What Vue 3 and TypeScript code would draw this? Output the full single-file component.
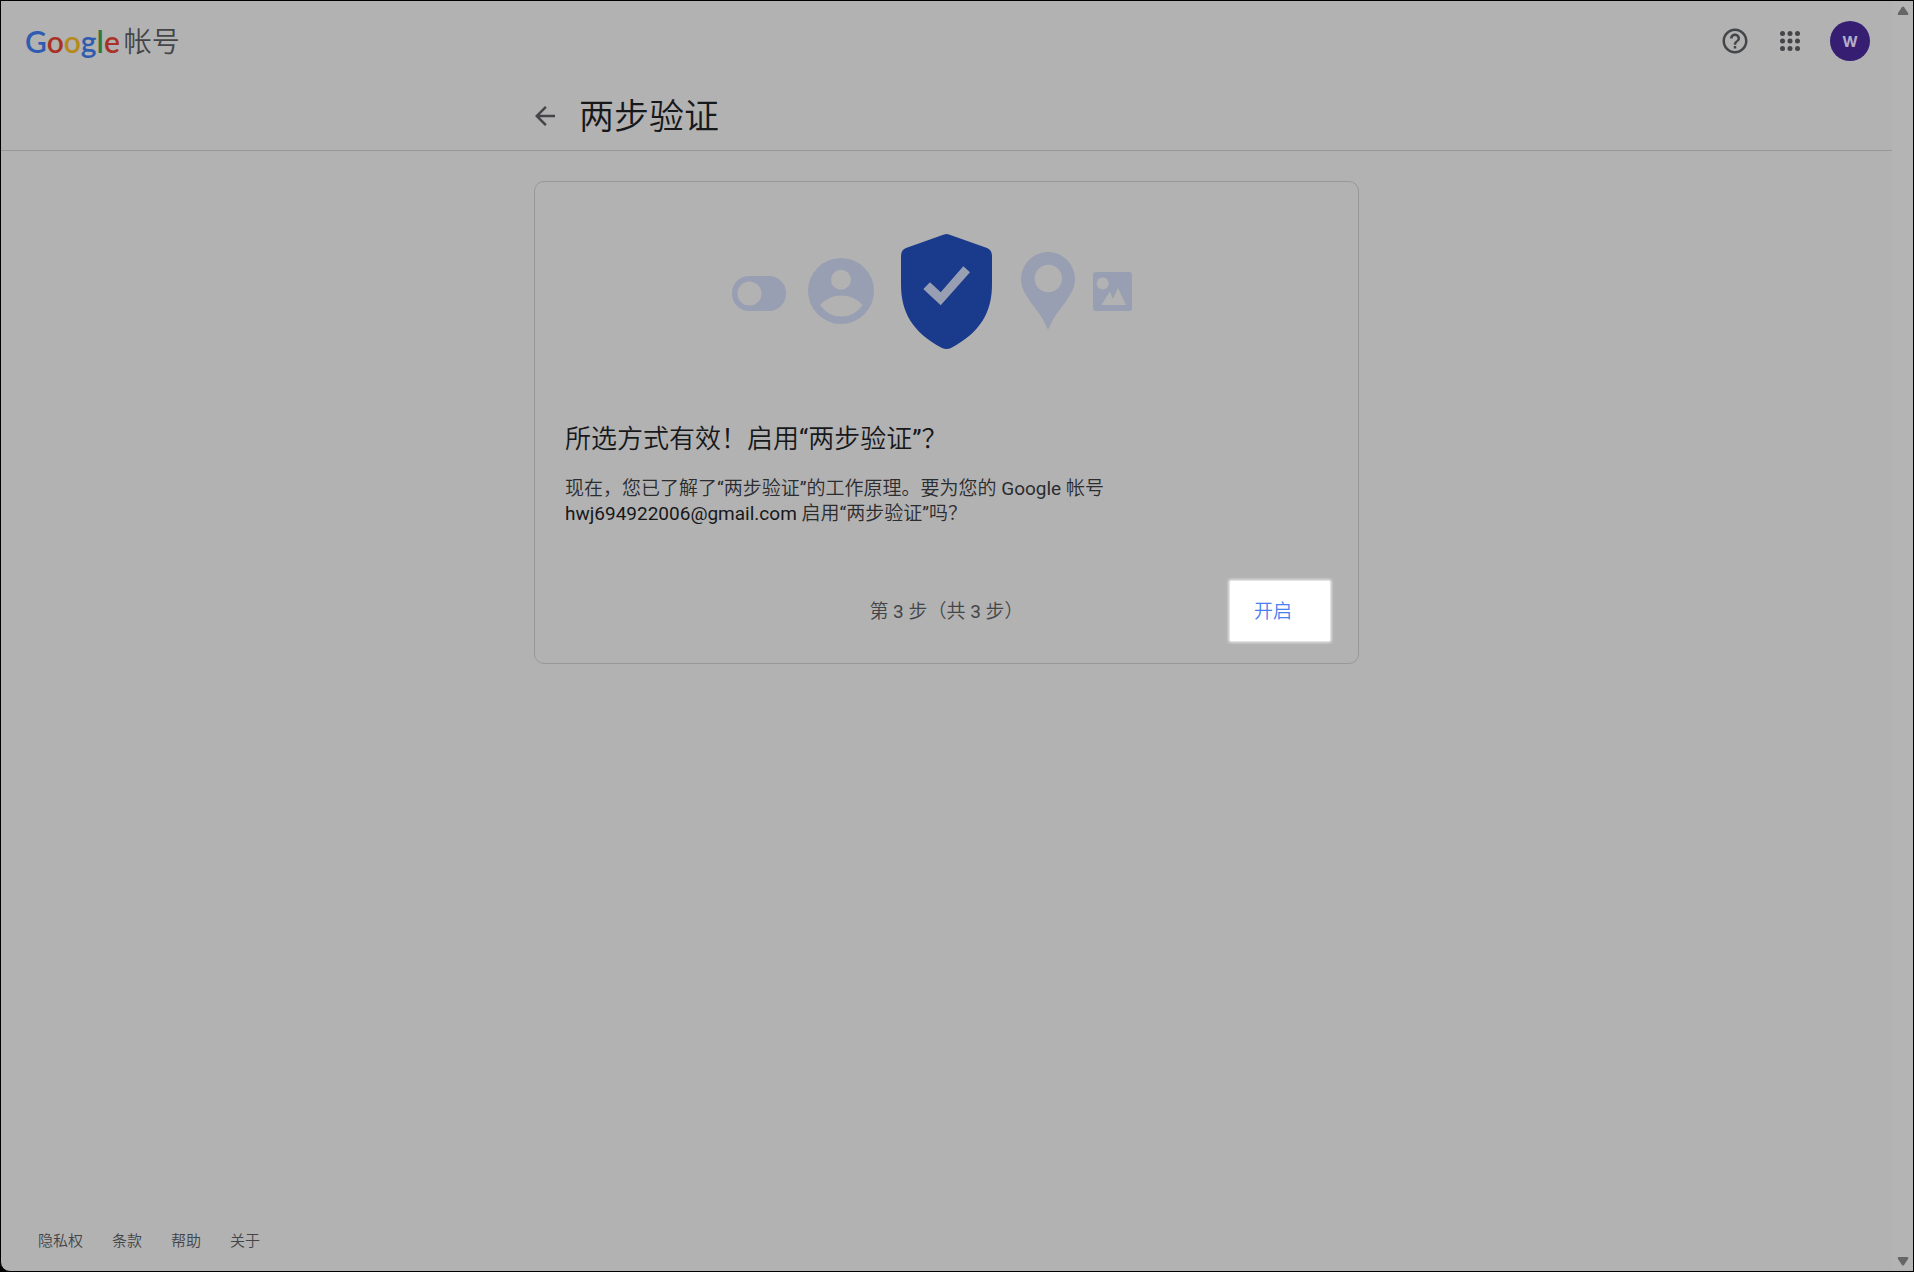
<script setup lang="ts">
interface FooterLink {
  label: string
  href: string
}

const email = 'hwj694922006@gmail.com'
const logo: { ch: string; tone: string }[] = [
  { ch: 'G', tone: 'blue' },
  { ch: 'o', tone: 'red' },
  { ch: 'o', tone: 'yellow' },
  { ch: 'g', tone: 'blue' },
  { ch: 'l', tone: 'green' },
  { ch: 'e', tone: 'red' },
]
const footerLinks: FooterLink[] = [
  { label: '隐私权', href: '#privacy' },
  { label: '条款', href: '#terms' },
  { label: '帮助', href: '#help' },
  { label: '关于', href: '#about' },
]
</script>

<template>
  <div class="window">
    <div class="page">
      <header class="header">
        <div class="topbar">
          <a class="brand" href="#home">
            <span class="logo"><span v-for="(l, i) in logo" :key="i" :class="l.tone">{{ l.ch }}</span></span>
            <span class="product">帐号</span>
          </a>
          <div class="tools">
            <button class="icon-btn" type="button" aria-label="帮助">
              <svg viewBox="0 0 24 24" width="30" height="30">
                <path d="M11 18h2v-2h-2v2zm1-16C6.48 2 2 6.48 2 12s4.48 10 10 10 10-4.48 10-10S17.52 2 12 2zm0 18c-4.410 0-8-3.590-8-8s3.590-8 8-8 8 3.590 8 8-3.590 8-8 8zm0-14c-2.210 0-4 1.790-4 4h2c0-1.100.9-2 2-2s2 .9 2 2c0 2-3 1.750-3 5h2c0-2.250 3-2.500 3-5 0-2.210-1.790-4-4-4z" />
              </svg>
            </button>
            <button class="icon-btn" type="button" aria-label="Google 应用">
              <svg viewBox="0 0 24 24" width="30" height="30">
                <template v-for="y in [6, 12, 18]" :key="y">
                  <circle v-for="x in [6, 12, 18]" :key="x" :cx="x" :cy="y" r="2" />
                </template>
              </svg>
            </button>
            <button class="avatar" type="button">W</button>
          </div>
        </div>
        <div class="titlebar">
          <button class="icon-btn back" type="button" aria-label="返回">
            <svg viewBox="4 4 16 16" width="20" height="20">
              <path d="M20 11H7.830l5.590-5.590L12 4l-8 8 8 8 1.410-1.410L7.830 13H20v-2z" />
            </svg>
          </button>
          <h1>两步验证</h1>
        </div>
      </header>

      <main class="main">
        <section class="card">
          <svg class="art" viewBox="0 0 441 140" width="441" height="140" aria-hidden="true">
            <g class="soft">
              <rect x="6" y="56" width="54" height="35" rx="17" />
              <circle cx="115" cy="71" r="33" />
              <path d="M322 32a27 27 0 0 0-27 27c0 6 2 11 5 16 7 12 15 18 22 35 7-17 15-23 22-35 3-5 5-10 5-16a27 27 0 0 0-27-27z" />
              <rect x="367" y="52" width="39" height="39" rx="3" />
            </g>
            <g class="hole">
              <circle cx="23.500" cy="73.500" r="12" />
              <circle cx="115" cy="59.700" r="10" />
              <path d="M94 85q8.500-9.500 21.300-9.500T136.700 85q-8 11.500-21.400 11.500T94 85z" />
              <circle cx="322.300" cy="58.500" r="13.700" />
              <circle cx="376.700" cy="63.500" r="6" />
              <path d="M375.300 85l8.400-13.300 3.300 7 5-10.700 8 17z" />
            </g>
            <path class="shield" d="M218 14.500q2.500-1 5 0L261 28q5 2 5 8v28c0 28-11 48-41 64q-4.500 2-9 0C186 112 175 92 175 64V36q0-6 5-8z" />
            <path class="soft" d="M197.300 69l6.700-6.700 10.700 10 22.600-26 6.700 6-29.300 33z" />
          </svg>
          <h2>所选方式有效！启用“两步验证”？</h2>
          <p class="desc">现在，您已了解了“两步验证”的工作原理。要为您的 Google 帐号<br /><strong>{{ email }}</strong> 启用“两步验证”吗？</p>
          <div class="actions">
            <span class="step">第 3 步（共 3 步）</span>
            <button class="enable" type="button">开启</button>
          </div>
        </section>
      </main>

      <footer class="footer">
        <a v-for="link in footerLinks" :key="link.href" :href="link.href">{{ link.label }}</a>
      </footer>
    </div>
    <div class="scroll" aria-hidden="true">
      <svg viewBox="0 0 12 9" width="12" height="9"><path d="M5 1q1-1 2 0l4 6q1 2-1 2H2Q0 9 1 7z" /></svg>
      <svg viewBox="0 0 12 9" width="12" height="9"><path d="M5 8q1 1 2 0l4-6q1-2-1-2H2Q0 0 1 2z" /></svg>
    </div>
  </div>
</template>

<style>
body {
  margin: 0;
  background: #000;
}
</style>

<style scoped>
.window {
  box-sizing: border-box;
  display: flex;
  min-height: 100vh;
  border: 1px solid #000;
  border-bottom-left-radius: 10px;
  background: #b2b2b2;
  color: #17181a;
  font-family: Roboto, "Noto Sans CJK SC DemiLight", "Noto Sans CJK SC", sans-serif;
  font-size: 19px;
}
.page {
  flex: 1;
  display: flex;
  flex-direction: column;
}
button {
  margin: 0;
  padding: 0;
  border: 0;
  background: none;
  font: inherit;
  cursor: pointer;
}
a {
  color: inherit;
  text-decoration: none;
}
svg {
  display: block;
}
.header {
  border-bottom: 1px solid #989899;
}
.topbar {
  display: flex;
  align-items: center;
  justify-content: space-between;
  height: 80px;
  padding: 0 22px 0 24px;
}
.brand {
  display: flex;
  align-items: center;
  gap: 4px;
}
.logo {
  font-family: Lato, sans-serif;
  font-size: 30px;
  font-weight: 600;
  line-height: 40px;
}
.blue { color: #2f5cb0; }
.red { color: #a83226; }
.yellow { color: #b58a1c; }
.green { color: #2c7a3c; }
.product {
  padding-top: 4px;
  color: #434548;
  font-size: 28px;
  line-height: 40px;
}
.tools {
  display: flex;
  align-items: center;
  gap: 25px;
}
.icon-btn {
  fill: #434548;
}
.avatar {
  width: 40px;
  height: 40px;
  border-radius: 50%;
  background: #361f73;
  color: #b4aecb;
  font-family: Inter, sans-serif;
  font-size: 15px;
  font-weight: 700;
}
.titlebar {
  display: flex;
  align-items: center;
  gap: 24px;
  box-sizing: border-box;
  width: 825px;
  max-width: 100%;
  height: 69px;
  margin: 0 auto;
  padding-left: 1px;
}
h1 {
  margin: 0;
  padding-top: 4px;
  font-size: 35px;
  font-weight: 400;
  line-height: 44px;
}
.main {
  flex: 1;
  padding-top: 30px;
}
.card {
  box-sizing: border-box;
  width: 825px;
  max-width: 100%;
  margin: 0 auto;
  padding: 38px 0 22px;
  border: 1px solid #989899;
  border-radius: 10px;
}
.art {
  margin: 0 auto;
}
.soft {
  fill: #999fb2;
}
.hole {
  fill: #b2b2b2;
}
.shield {
  fill: #1a3a8b;
}
h2 {
  margin: 61px 30px 0;
  font-size: 26px;
  font-weight: 400;
  line-height: 36px;
}
.desc {
  margin: 19px 30px 0;
  color: #2b2c2f;
  line-height: 25px;
}
.desc strong {
  color: #17181a;
  font-weight: 400;
}
.actions {
  display: grid;
  grid-template-columns: 1fr auto 1fr;
  align-items: center;
  margin-top: 55px;
  padding: 0 28px;
}
.step {
  grid-column: 2;
  padding-bottom: 4px;
  color: #434548;
}
.enable {
  justify-self: end;
  width: 100px;
  height: 60px;
  padding: 0 14px 4px 0;
  background: #fff;
  box-shadow: 0 0 3px 1px #fff;
  color: #4a80ee;
  font-weight: 350;
}
.footer {
  display: flex;
  gap: 29px;
  padding: 0 37px 20px;
  color: #434548;
  font-size: 15px;
  font-weight: 350;
  line-height: 20px;
}
.scroll {
  display: flex;
  flex-direction: column;
  align-items: center;
  justify-content: space-between;
  box-sizing: border-box;
  width: 21px;
  padding: 5px 0;
  background: #b4b4b4;
  fill: #666;
}
</style>
